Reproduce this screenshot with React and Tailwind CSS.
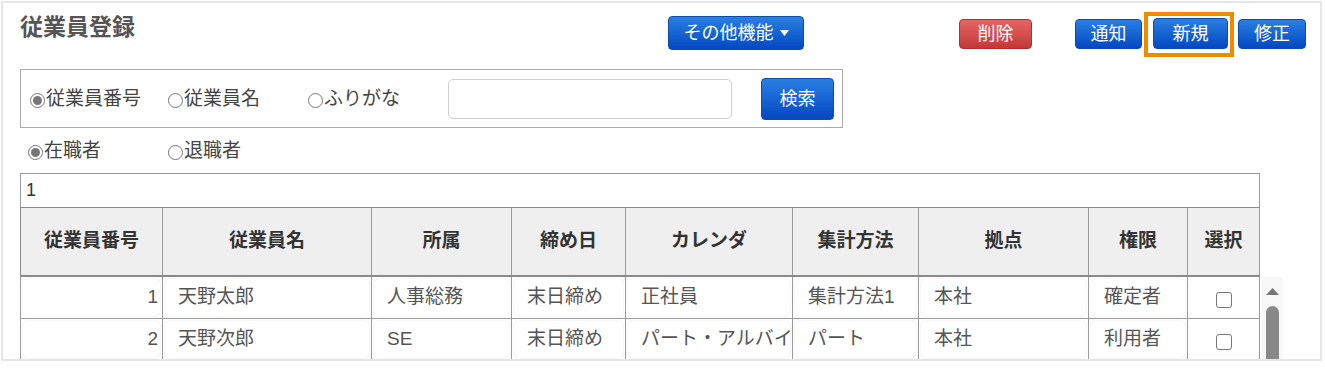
import React from 'react';

const cols = [
  { label: '従業員番号' },
  { label: '従業員名' },
  { label: '所属' },
  { label: '締め日' },
  { label: 'カレンダ' },
  { label: '集計方法' },
  { label: '拠点' },
  { label: '権限' },
  { label: '選択' },
];

const rows = [
  ['1', '天野太郎', '人事総務', '末日締め', '正社員', '集計方法1', '本社', '確定者'],
  ['2', '天野次郎', 'SE', '末日締め', 'パート・アルバイト', 'パート', '本社', '利用者'],
];

const gridCols = 'grid grid-cols-[142px_209px_140px_114px_167px_126px_170px_99px_72px]';

const Radio = ({ checked, label, width }) => (
  <label className={`flex items-center ${width}`}>
    <span className="relative mt-[3px] flex h-[15px] w-[15px] items-center justify-center rounded-full border border-[#777] bg-white">
      {checked && <span className="h-[9px] w-[9px] rounded-full bg-[#777]" />}
    </span>
    <span className="ml-px text-[19px] leading-[24px] text-[#444]">{label}</span>
  </label>
);

const BlueButton = ({ children, className = '' }) => (
  <button
    className={`flex items-center justify-center rounded-[4px] border border-[#0a4cb0] bg-linear-to-b from-[#2a7fe2] to-[#0647c2] text-[18px] leading-none text-white ${className}`}
  >
    {children}
  </button>
);

const Cell = ({ children, align = 'left' }) => (
  <div className="h-full border-r border-[#9a9a9a] p-[2px]">
    <div
      className={`flex h-full items-center overflow-hidden whitespace-nowrap rounded-[5px] bg-white shadow-[0_0_2px_rgba(0,0,0,0.13)] ${
        align === 'right' ? 'justify-end pr-[2px]' : 'pl-[13px]'
      }`}
    >
      {children}
    </div>
  </div>
);

export default function App() {
  return (
    <div className="h-[370px] w-[1325px] bg-white pl-px pt-px font-['Liberation_Sans','Noto_Sans_CJK_JP',sans-serif]">
      <div className="h-[360px] w-[1321px] overflow-hidden border-2 border-[#e6e6e6] bg-white">
        {/* Top bar */}
        <div className="flex h-[66px] items-start">
          <div className="w-[665px] pl-[17px] pt-[10px]">
            <h1 className="text-[23px] font-bold leading-[28px] text-[#555]">従業員登録</h1>
          </div>
          <BlueButton className="mt-[13px] h-[34px] w-[136px] gap-[6px]">
            その他機能
            <svg width="9" height="6" viewBox="0 0 9 6">
              <path d="M0 0h9L4.5 6z" fill="#fff" />
            </svg>
          </BlueButton>
          <button className="ml-[155px] mt-[16px] flex h-[30px] w-[73px] items-center justify-center rounded-[4px] border border-[#b03030] bg-linear-to-b from-[#e66464] to-[#c23838] text-[18px] leading-none text-white">
            削除
          </button>
          <BlueButton className="ml-[43px] mt-[16px] h-[30px] w-[67px]">通知</BlueButton>
          <div className="ml-[2px] mt-[9px] border-[4px] border-[#f08a00] pb-[4px] pl-[5px] pr-[2px] pt-[2px]">
            <BlueButton className="h-[31px] w-[75px]">新規</BlueButton>
          </div>
          <BlueButton className="ml-[4px] mt-[16px] h-[30px] w-[68px]">修正</BlueButton>
        </div>

        {/* Search box */}
        <div className="ml-[17px] flex h-[59px] w-[823px] items-center border border-[#aaa]">
          <div className="flex items-center pl-[9px]">
            <Radio checked label="従業員番号" width="w-[138px]" />
            <Radio label="従業員名" width="w-[140px]" />
            <Radio label="ふりがな" width="w-[140px]" />
          </div>
          <input
            type="text"
            className="h-[40px] w-[284px] rounded-[5px] border border-[#d0d0d0] bg-white outline-none"
          />
          <BlueButton className="ml-[29px] h-[42px] w-[73px]">検索</BlueButton>
        </div>

        {/* Status filter */}
        <div className="flex h-[45px] items-center pl-[25px]">
          <Radio checked label="在職者" width="w-[140px]" />
          <Radio label="退職者" width="w-[140px]" />
        </div>

        {/* Table */}
        <div className="ml-[17px] w-[1240px]">
          <div className="flex h-[34px] items-center border-l border-r border-t border-[#9a9a9a] px-[5px] text-[18px] text-[#333]">
            1
          </div>
          <div className={`${gridCols} h-[70px] border-b-2 border-l border-t border-[#8a8a8a] bg-[#efefef]`}>
            {cols.map((c) => (
              <div
                key={c.label}
                className="flex items-center justify-center border-r border-[#9a9a9a] text-[19px] font-bold text-[#333]"
              >
                {c.label}
              </div>
            ))}
          </div>
        </div>

        <div className="ml-[17px] flex">
          <div className="w-[1240px]">
            {rows.map((r) => (
              <div key={r[0]} className={`${gridCols} h-[42px] border-b border-l border-[#9a9a9a] text-[19px] text-[#555]`}>
                <Cell align="right">{r[0]}</Cell>
                {r.slice(1).map((v, i) => (
                  <Cell key={i}>{v}</Cell>
                ))}
                <div className="flex h-full items-center justify-center border-r border-[#9a9a9a]">
                  <span className="mt-[4px] h-[16px] w-[16px] rounded-[3px] border border-[#777] bg-white" />
                </div>
              </div>
            ))}
          </div>
          {/* Scrollbar */}
          <div className="ml-[2px] flex w-[21px] flex-col items-center bg-[#f8f8f8] pt-[11px]">
            <svg width="13" height="7" viewBox="0 0 13 7">
              <path d="M0 7L6.5 0L13 7z" fill="#777" />
            </svg>
            <div className="mt-[11px] h-[80px] w-[13px] rounded-t-full bg-[#888]" />
          </div>
        </div>
      </div>
    </div>
  );
}
